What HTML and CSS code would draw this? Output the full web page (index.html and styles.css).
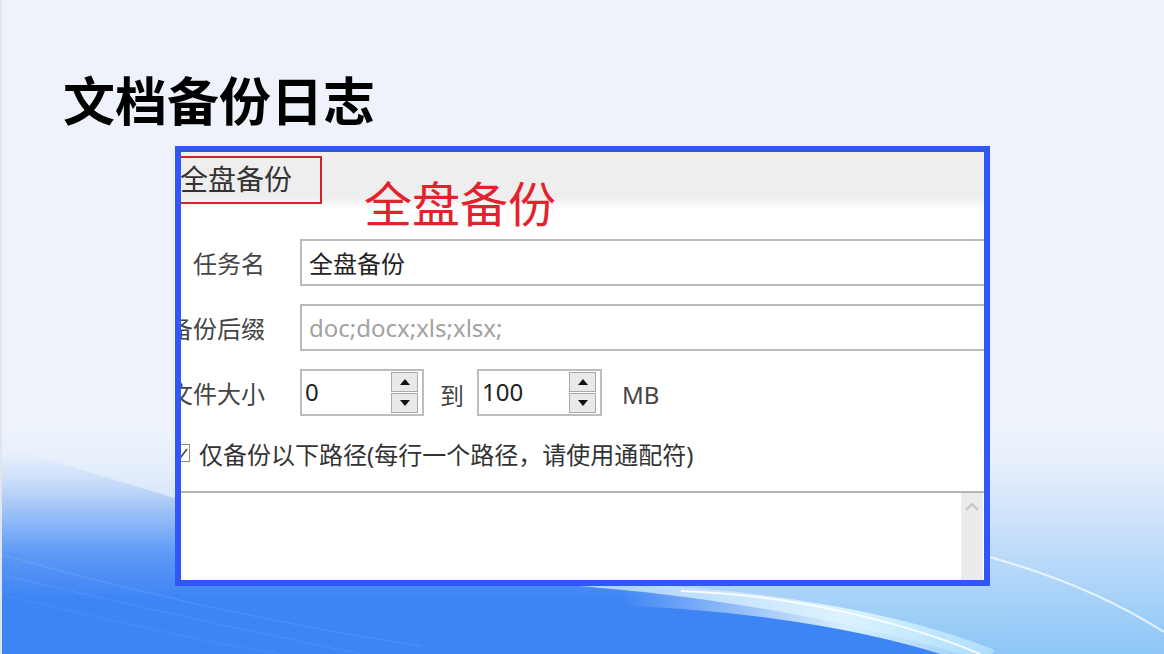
FILE: index.html
```html
<!DOCTYPE html>
<html lang="zh-CN">
<head>
    <meta charset="utf-8">
    <meta name="viewport" content="width=device-width, initial-scale=1">
    <title>文档备份日志</title>
    <link rel="stylesheet" href="styles.css">
</head>
<body>
    <div class="slide">
        <svg class="waves" viewBox="0 0 1164 654" preserveAspectRatio="none">
            <defs>
                <linearGradient id="fade" x1="0" y1="410" x2="0" y2="654" gradientUnits="userSpaceOnUse">
                    <stop offset="0" stop-color="#eef3fb" stop-opacity="0"/>
                    <stop offset="0.4" stop-color="#d3e4fb"/>
                    <stop offset="1" stop-color="#8cc6f6"/>
                </linearGradient>
                <linearGradient id="deep" x1="0" y1="445" x2="0" y2="600" gradientUnits="userSpaceOnUse">
                    <stop offset="0" stop-color="#dbe7fb" stop-opacity="0"/>
                    <stop offset="0.35" stop-color="#b0cdf8"/>
                    <stop offset="0.7" stop-color="#5d99f5"/>
                    <stop offset="1" stop-color="#3d84f5"/>
                </linearGradient>
                <linearGradient id="glow" x1="620" y1="0" x2="1000" y2="0" gradientUnits="userSpaceOnUse">
                    <stop offset="0" stop-color="#ffffff" stop-opacity="0"/>
                    <stop offset="0.6" stop-color="#dff5ff" stop-opacity="0.95"/>
                    <stop offset="1" stop-color="#b9e6ff" stop-opacity="0.7"/>
                </linearGradient>
            </defs>
            <rect x="0" y="400" width="1164" height="254" fill="url(#fade)"/>
            <path d="M0 445 C 180 500, 380 568, 600 588 C 740 600, 860 625, 960 654 L 0 654 Z" fill="url(#deep)"/>
            <path d="M600 594 C 760 598, 900 624, 990 660" fill="none" stroke="url(#glow)" stroke-width="22"/>
            <path d="M680 591 C 800 595, 910 625, 980 654" fill="none" stroke="#ffffff" stroke-opacity="0.85" stroke-width="2"/>
            <path d="M985 556 C 1060 576, 1120 604, 1164 632" fill="none" stroke="#ffffff" stroke-opacity="0.7" stroke-width="2"/>
            <path d="M0 555 C 120 588, 260 622, 420 646" fill="none" stroke="#ffffff" stroke-opacity="0.12" stroke-width="1"/>
            <path d="M0 575 C 120 603, 250 632, 360 654" fill="none" stroke="#ffffff" stroke-opacity="0.1" stroke-width="1"/>
            <path d="M0 595 C 100 618, 200 642, 280 654" fill="none" stroke="#ffffff" stroke-opacity="0.08" stroke-width="1"/>
        </svg>

        <h1 class="title">文档备份日志</h1>

        <div class="shot">
            <div class="tabbar">
                <div class="tab">全盘备份</div>
                <div class="note">全盘备份</div>
            </div>
            <div class="form">
                <div class="row">
                    <span class="lbl">任务名</span>
                    <div class="field">全盘备份</div>
                </div>
                <div class="row">
                    <span class="lbl">备份后缀</span>
                    <div class="field hint">doc;docx;xls;xlsx;</div>
                </div>
                <div class="row">
                    <span class="lbl">文件大小</span>
                    <div class="spin">
                        <span>0</span>
                        <div class="arrows"><i class="up"></i><i class="down"></i></div>
                    </div>
                    <span class="to">到</span>
                    <div class="spin">
                        <span>100</span>
                        <div class="arrows"><i class="up"></i><i class="down"></i></div>
                    </div>
                    <span class="unit">MB</span>
                </div>
                <div class="check">
                    <span class="box">
                        <svg width="14" height="14" viewBox="0 0 14 14"><path d="M3 8 L6 11 L12 3" fill="none" stroke="#444" stroke-width="1.6"/></svg>
                    </span>
                    <span>仅备份以下路径(每行一个路径，请使用通配符)</span>
                </div>
            </div>
            <div class="paths">
                <div class="scroll">
                    <svg width="16" height="10" viewBox="0 0 16 10"><path d="M2 9 L8 3 L14 9" fill="none" stroke="#c4c4c4" stroke-width="2"/></svg>
                </div>
            </div>
        </div>
    </div>
</body>
</html>
```

FILE: styles.css
```css
* {
    box-sizing: border-box;
}
html, body {
    margin: 0;
    height: 100%;
    overflow: hidden;
    background: #eef3fb;
    font-family: "Noto Sans", "Noto Sans CJK SC", sans-serif;
}
.slide {
    position: relative;
    width: 1164px;
    height: 654px;
    overflow: hidden;
    background: #eef3fb;
    border-left: 2px solid #e1e6ee;
}
.waves {
    position: absolute;
    left: 0;
    top: 0;
    width: 100%;
    height: 100%;
    z-index: 0;
}
.title {
    position: relative;
    z-index: 1;
    margin: 0;
    padding: 73px 0 0 61px;
    font-family: "Noto Sans CJK SC", sans-serif;
    font-size: 52px;
    font-weight: 700;
    line-height: 52px;
    color: #000;
}
.shot {
    position: relative;
    z-index: 1;
    margin: 21px 0 0 173px;
    width: 815px;
    height: 440px;
    border: 6px solid #3157fb;
    background: #fff;
    overflow: hidden;
    display: flex;
    flex-direction: column;
}
.tabbar {
    flex-shrink: 0;
    height: 55px;
    display: flex;
    align-items: flex-start;
    background: linear-gradient(to bottom, #f3efed 0%, #eeeeee 25%, #eeeeee 82%, #fbfbfb 100%);
}
.tab {
    margin: 4px 0 0 -3px;
    width: 144px;
    height: 48px;
    border: 2px solid #d3222b;
    padding: 0 0 5px 0;
    display: flex;
    align-items: center;
    font-family: "Noto Sans CJK SC", sans-serif;
    font-size: 28px;
    color: #333;
}
.note {
    position: relative;
    z-index: 2;
    margin: 25px 0 0 42px;
    font-family: "Noto Sans CJK SC", sans-serif;
    font-size: 48px;
    line-height: 48px;
    color: #e4222d;
}
.form {
    flex-shrink: 0;
    height: 284px;
    padding-top: 32px;
    font-size: 24px;
    color: #333;
}
.row {
    display: flex;
    align-items: center;
    height: 47px;
    margin-bottom: 18px;
}
.lbl {
    flex-shrink: 0;
    width: 100px;
    margin: 0 35px 0 -16px;
    text-align: right;
    font-family: "Noto Sans CJK SC", sans-serif;
    color: #444;
}
.field {
    flex-shrink: 0;
    width: 800px;
    height: 47px;
    border: 2px solid #b9b9b9;
    padding-left: 7px;
    display: flex;
    align-items: center;
    color: #222;
    font-family: "Noto Sans CJK SC", sans-serif;
}
.field.hint {
    color: #a2a2a2;
    font-family: "Noto Sans", sans-serif;
}
.spin {
    flex-shrink: 0;
    width: 124px;
    height: 47px;
    border: 2px solid #bdbdbd;
    padding: 0 4px 2px 3px;
    display: flex;
    align-items: center;
    justify-content: space-between;
    color: #222;
}
.spin + .to + .spin {
    width: 125px;
}
.arrows {
    width: 27px;
    height: 41px;
    margin-top: 2px;
    display: flex;
    flex-direction: column;
    gap: 1px;
}
.arrows i {
    flex: 1;
    border: 1px solid #a9a9a9;
    background: #e9e9e9;
    display: flex;
    align-items: center;
    justify-content: center;
}
.arrows i::before {
    content: "";
    border-left: 5px solid transparent;
    border-right: 5px solid transparent;
}
.arrows .up::before {
    border-bottom: 6px solid #111;
}
.arrows .down::before {
    border-top: 6px solid #111;
}
.to {
    margin: 4px 13px 0 16px;
    font-family: "Noto Sans CJK SC", sans-serif;
    color: #444;
}
.unit {
    margin: 4px 0 0 20px;
    color: #444;
}
.check {
    display: flex;
    align-items: center;
    height: 30px;
    margin-top: 22px;
    color: #333;
}
.box {
    flex-shrink: 0;
    width: 16px;
    height: 18px;
    margin: 0 9px 0 -7px;
    border: 1px solid #8a8a8a;
    display: flex;
    align-items: center;
    justify-content: flex-end;
}
.paths {
    flex: 1;
    border-top: 2px solid #b5b5b5;
    display: flex;
    justify-content: flex-end;
}
.scroll {
    width: 22px;
    margin-right: 1px;
    background: #ebebeb;
    display: flex;
    justify-content: center;
    padding-top: 8px;
}
```
